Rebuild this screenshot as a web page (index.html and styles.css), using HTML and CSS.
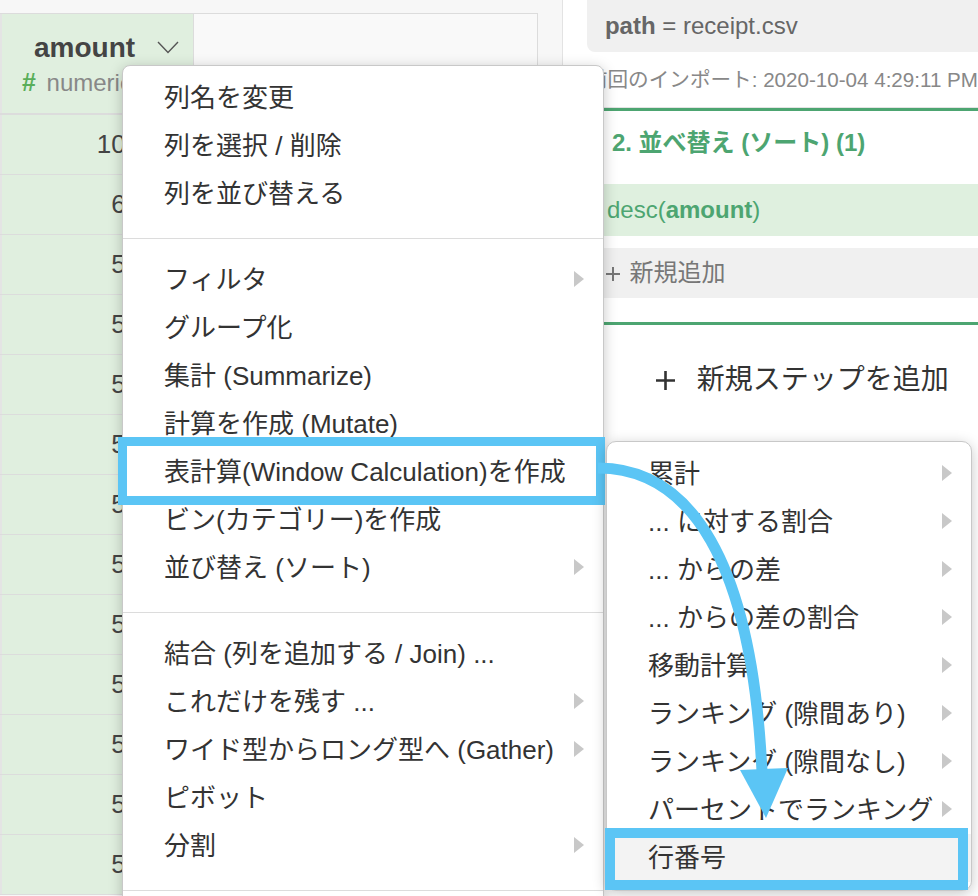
FILE: index.html
```html
<!DOCTYPE html>
<html lang="ja">

<head>
    <meta charset="UTF-8">
    <title>ステップ | receipt</title>
    <link rel="stylesheet" href="styles.css">
</head>

<body>
    <div class="screen">
        <div class="table-area">
            <div class="grid">
                <div class="head-row">
                    <div class="col-head">
                        <div class="col-name">amount
                            <svg class="caret" width="22" height="13" viewBox="0 0 22 13"><polyline points="1,1 11,11.5 21,1" fill="none" stroke="#555" stroke-width="1.4"/></svg>
                        </div>
                        <div class="col-type"><span class="hash">#</span> numeric</div>
                    </div>
                    <div class="col-head blank"></div>
                </div>
                <div class="row"><div class="cell num">10925</div><div class="cell"></div></div>
                <div class="row"><div class="cell num">6606</div><div class="cell"></div></div>
                <div class="row"><div class="cell num">5480</div><div class="cell"></div></div>
                <div class="row"><div class="cell num">5480</div><div class="cell"></div></div>
                <div class="row"><div class="cell num">5480</div><div class="cell"></div></div>
                <div class="row"><div class="cell num">5440</div><div class="cell"></div></div>
                <div class="row"><div class="cell num">5440</div><div class="cell"></div></div>
                <div class="row"><div class="cell num">5280</div><div class="cell"></div></div>
                <div class="row"><div class="cell num">5280</div><div class="cell"></div></div>
                <div class="row"><div class="cell num">5280</div><div class="cell"></div></div>
                <div class="row"><div class="cell num">5200</div><div class="cell"></div></div>
                <div class="row"><div class="cell num">5200</div><div class="cell"></div></div>
                <div class="row"><div class="cell num">5000</div><div class="cell"></div></div>
            </div>
        </div>

        <div class="side">
            <div class="source"><b>path</b> = receipt.csv</div>
            <div class="imported">前回のインポート: 2020-10-04 4:29:11 PM</div>
            <div class="step">
                <div class="step-title">2. 並べ替え (ソート) (1)</div>
                <div class="step-line">desc(<b>amount</b>)</div>
                <div class="step-add">
                    <svg width="16" height="16" viewBox="0 0 16 16"><path d="M8 1v14M1 8h14" stroke="#777" stroke-width="2"/></svg>
                    新規追加
                </div>
            </div>
            <div class="new-step">
                <svg width="21" height="21" viewBox="0 0 21 21"><path d="M10.5 1v19M1 10.5h19" stroke="#333" stroke-width="2.6"/></svg>
                <span>新規ステップを追加</span>
            </div>
        </div>

        <div class="menu main-menu">
            <div class="group first">
                <div class="item">列名を変更</div>
                <div class="item">列を選択 / 削除</div>
                <div class="item">列を並び替える</div>
            </div>
            <div class="group">
                <div class="item more">フィルタ</div>
                <div class="item">グループ化</div>
                <div class="item">集計 (Summarize)</div>
                <div class="item">計算を作成 (Mutate)</div>
                <div class="item marked">表計算(Window Calculation)を作成</div>
                <div class="item">ビン(カテゴリー)を作成</div>
                <div class="item more">並び替え (ソート)</div>
            </div>
            <div class="group">
                <div class="item">結合 (列を追加する / Join) ...</div>
                <div class="item more">これだけを残す ...</div>
                <div class="item more">ワイド型からロング型へ (Gather)</div>
                <div class="item">ピボット</div>
                <div class="item more">分割</div>
            </div>
            <div class="group"></div>
        </div>

        <div class="menu sub-menu">
            <div class="item more">累計</div>
            <div class="item more">... に対する割合</div>
            <div class="item more">... からの差</div>
            <div class="item more">... からの差の割合</div>
            <div class="item more">移動計算</div>
            <div class="item more">ランキング (隙間あり)</div>
            <div class="item more">ランキング (隙間なし)</div>
            <div class="item more">パーセントでランキング</div>
            <div class="item active marked">行番号</div>
        </div>

        <svg class="arrow" width="978" height="896" viewBox="0 0 978 896">
            <path d="M598 468 C690 468 752 560 762 772" fill="none" stroke="#5bc5f5" stroke-width="11"/>
            <polygon points="740,770 788,768 766,818" fill="#5bc5f5"/>
        </svg>
    </div>
</body>

</html>
```

FILE: styles.css
```css
body {
    margin: 0;
    font-family: "Liberation Sans", "Noto Sans CJK JP", sans-serif;
    color: #333;
    background-color: #f7f7f7;
}

.screen {
    position: relative;
    display: flex;
    width: 978px;
    height: 896px;
    overflow: hidden;
}

/* data grid */
.table-area {
    width: 562px;
    padding-top: 13px;
    background-color: #f7f7f7;
}

.grid {
    width: 538px;
}

.head-row {
    display: flex;
    height: 99px;
    border-top: 1px solid #dcdcdc;
    border-bottom: 2px solid #dcdcdc;
}

.col-head {
    width: 193px;
    background-color: #e0efdf;
    border-left: 2px solid #e4e4e4;
    box-sizing: border-box;
}

.col-head.blank {
    flex: 1;
    background-color: #f9f9f9;
    border-left: 1px solid #dcdcdc;
    border-right: 1px solid #dcdcdc;
}

.col-name {
    padding: 17px 0 0 32px;
    font-size: 28px;
    line-height: 34px;
    font-weight: bold;
    color: #444;
}

.caret {
    margin-left: 14px;
    vertical-align: 3px;
}

.col-type {
    margin-top: 3px;
    padding-left: 20px;
    font-size: 24px;
    line-height: 28px;
    color: #888;
    white-space: nowrap;
}

.hash {
    color: #5aae5a;
    font-weight: bold;
    font-size: 25px;
    margin-right: 4px;
}

.row {
    display: flex;
    height: 59px;
    border-bottom: 1px solid #dcdcdc;
}

.cell {
    flex: 1;
    background-color: #fff;
}

.cell.num {
    flex: none;
    width: 193px;
    box-sizing: border-box;
    padding-right: 24px;
    border-left: 2px solid #e4e4e4;
    background-color: #e0efdf;
    text-align: right;
    font-size: 26px;
    line-height: 59px;
    color: #444;
}

/* step panel */
.side {
    flex: 1;
    background-color: #fff;
    border-left: 1px solid #e3e3e3;
}

.source {
    margin-left: 24px;
    height: 52px;
    padding-left: 18px;
    background-color: #f0f0f0;
    border-bottom-left-radius: 8px;
    font-size: 24px;
    line-height: 52px;
    color: #666;
}

.imported {
    height: 55px;
    padding-left: 24px;
    font-size: 20.6px;
    line-height: 56px;
    color: #888;
    white-space: nowrap;
}

.step {
    border-top: 1px solid #e3e3e3;
}

.step-title {
    border-top: 3px solid #4da571;
    padding: 18px 0 27px 49px;
    font-size: 24px;
    line-height: 28px;
    font-weight: bold;
    color: #4da571;
}

.step-line {
    margin-left: 24px;
    height: 52px;
    padding-left: 20px;
    background-color: #dff0df;
    font-size: 24px;
    line-height: 52px;
    color: #4da571;
}

.step-add {
    margin: 12px 0 24px 24px;
    height: 50px;
    padding-left: 18px;
    background-color: #f0f0f0;
    font-size: 24px;
    line-height: 50px;
    color: #777;
}

.step-add svg {
    margin-right: 2px;
    vertical-align: -1px;
}

.new-step {
    border-top: 3px solid #4da571;
    padding: 40px 0 0 92px;
    font-size: 28px;
    line-height: 30px;
    color: #333;
}

.new-step svg {
    margin-right: 13px;
    vertical-align: -2px;
}

/* context menus */
.menu {
    position: absolute;
    background-color: #fff;
    border: 1px solid #c8c8c8;
    box-shadow: 0 3px 14px rgba(0, 0, 0, 0.22);
}

.main-menu {
    left: 122px;
    top: 65px;
    width: 480px;
    border-radius: 8px;
}

.sub-menu {
    left: 606px;
    top: 441px;
    width: 364px;
    padding: 8px 0;
    border-radius: 10px;
}

.group {
    padding: 17px 0 20px;
    border-top: 1px solid #dcdcdc;
}

.group.first {
    padding-top: 8px;
    border-top: none;
}

.item {
    position: relative;
    height: 48px;
    padding-left: 41px;
    font-size: 26px;
    line-height: 48px;
    color: #333;
    white-space: nowrap;
}

.item.more::before {
    content: "";
    position: absolute;
    right: 19px;
    top: 15px;
    border-left: 10px solid #c8c8c8;
    border-top: 8px solid transparent;
    border-bottom: 8px solid transparent;
}

.item.active {
    background-color: #f3f3f3;
}

.main-menu .marked::after {
    content: "";
    position: absolute;
    top: -11px;
    bottom: -9px;
    left: -5px;
    right: -2px;
    border: 9px solid #5bc5f5;
}

.sub-menu .marked::after {
    content: "";
    position: absolute;
    top: -6px;
    bottom: -8px;
    left: -2px;
    right: 3px;
    border: 10px solid #5bc5f5;
}

.arrow {
    position: absolute;
    left: 0;
    top: 0;
    pointer-events: none;
}
```
